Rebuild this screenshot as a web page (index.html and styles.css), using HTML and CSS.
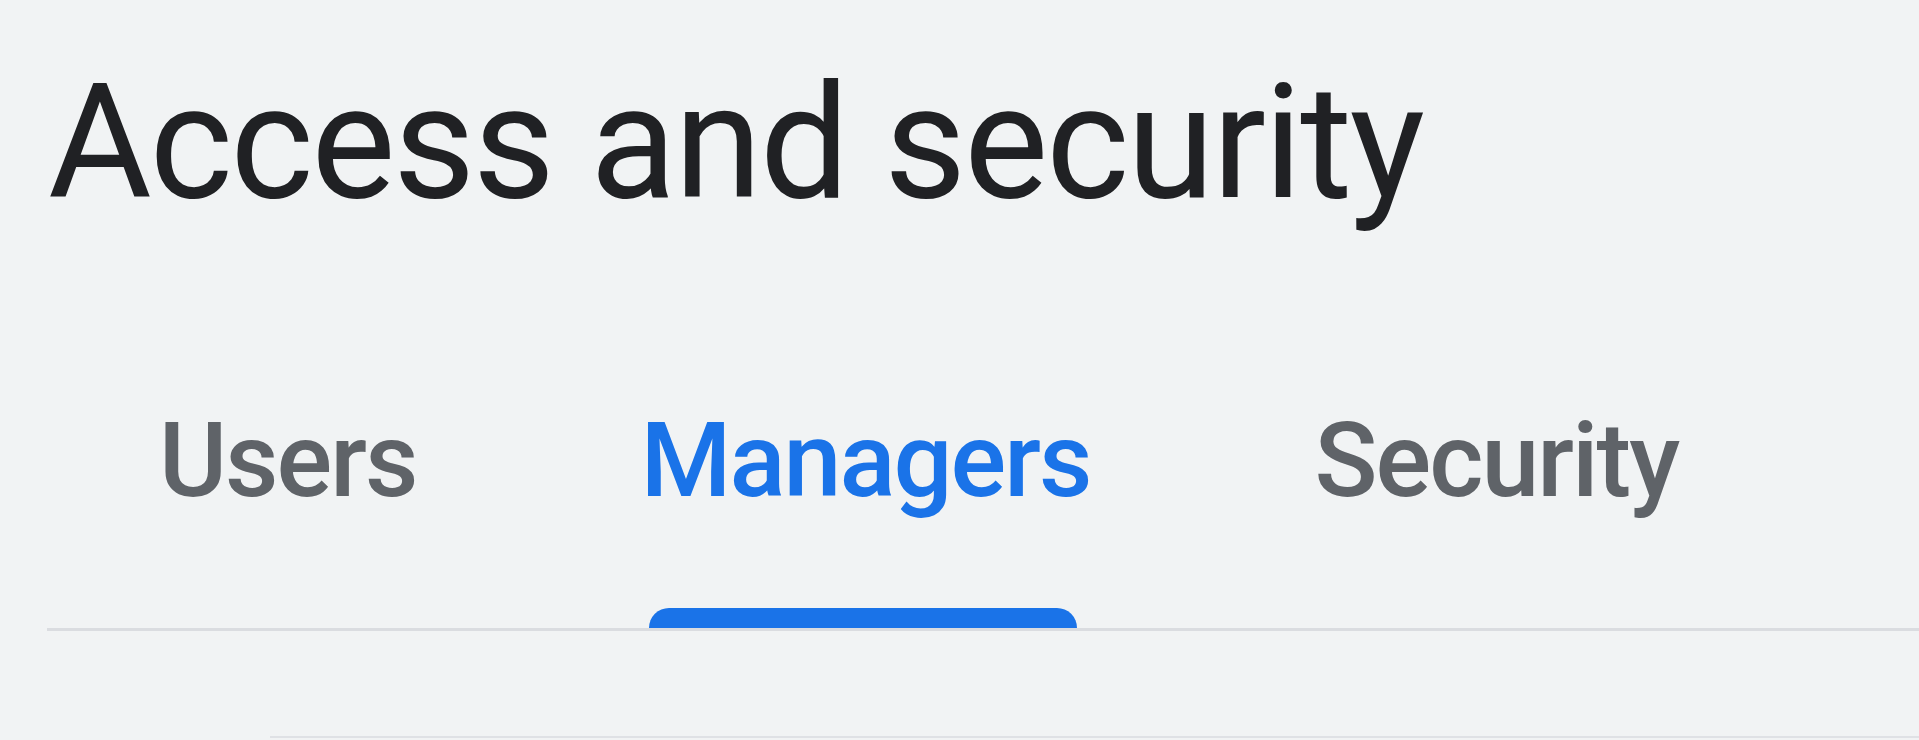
FILE: index.html
```html
<!DOCTYPE html>
<html lang="en">
<head>
  <meta charset="UTF-8" />
  <meta name="viewport" content="width=device-width, initial-scale=1.0"/>
  <title>Access and security</title>
  <link rel="stylesheet" href="styles.css">
</head>
<body>
  <div class="page">
    <h1 class="page-title">Access and security</h1>

    <div class="tabs">
      <div class="tab">
        <span class="tab-label">Users</span>
        <span class="tab-indicator"></span>
      </div>
      <div class="tab active">
        <span class="tab-label">Managers</span>
        <span class="tab-indicator"></span>
      </div>
      <div class="tab">
        <span class="tab-label">Security</span>
        <span class="tab-indicator"></span>
      </div>
    </div>

    <div class="card"></div>
  </div>
</body>
</html>
```

FILE: styles.css
```css
* {
  box-sizing: border-box;
  margin: 0;
  padding: 0;
  font-family: Roboto, 'Noto Sans', sans-serif;
}

html, body {
  height: 100%;
  overflow: hidden;
}

body {
  background-color: #f1f3f4;
  color: #202124;
}

.page {
  padding-left: 47px;
}

.page-title {
  margin-top: 50px;
  padding-left: 1px;
  font-size: 159px;
  line-height: 186px;
  font-weight: 400;
  letter-spacing: -2.3px;
  color: #202124;
  white-space: nowrap;
}

.tabs {
  display: flex;
  border-bottom: 3px solid #dadce0;
}

.tab {
  display: flex;
  flex-direction: column;
  padding: 164px 112px 0;
  cursor: pointer;
}

.tab-label {
  font-size: 104px;
  line-height: 122px;
  font-weight: 500;
  letter-spacing: -2px;
  color: #5f6368;
  white-space: nowrap;
}

.tab-indicator {
  height: 20px;
  margin: 86px 14px 0 8px;
  border-radius: 20px 20px 0 0;
}

.tab.active .tab-label {
  color: #1a73e8;
}

.tab.active .tab-indicator {
  background-color: #1a73e8;
}

.card {
  margin: 105px 0 0 223px;
  height: 4px;
  border-top: 2px solid #dfe1e5;
  background: #f1f3f4;
}
```
